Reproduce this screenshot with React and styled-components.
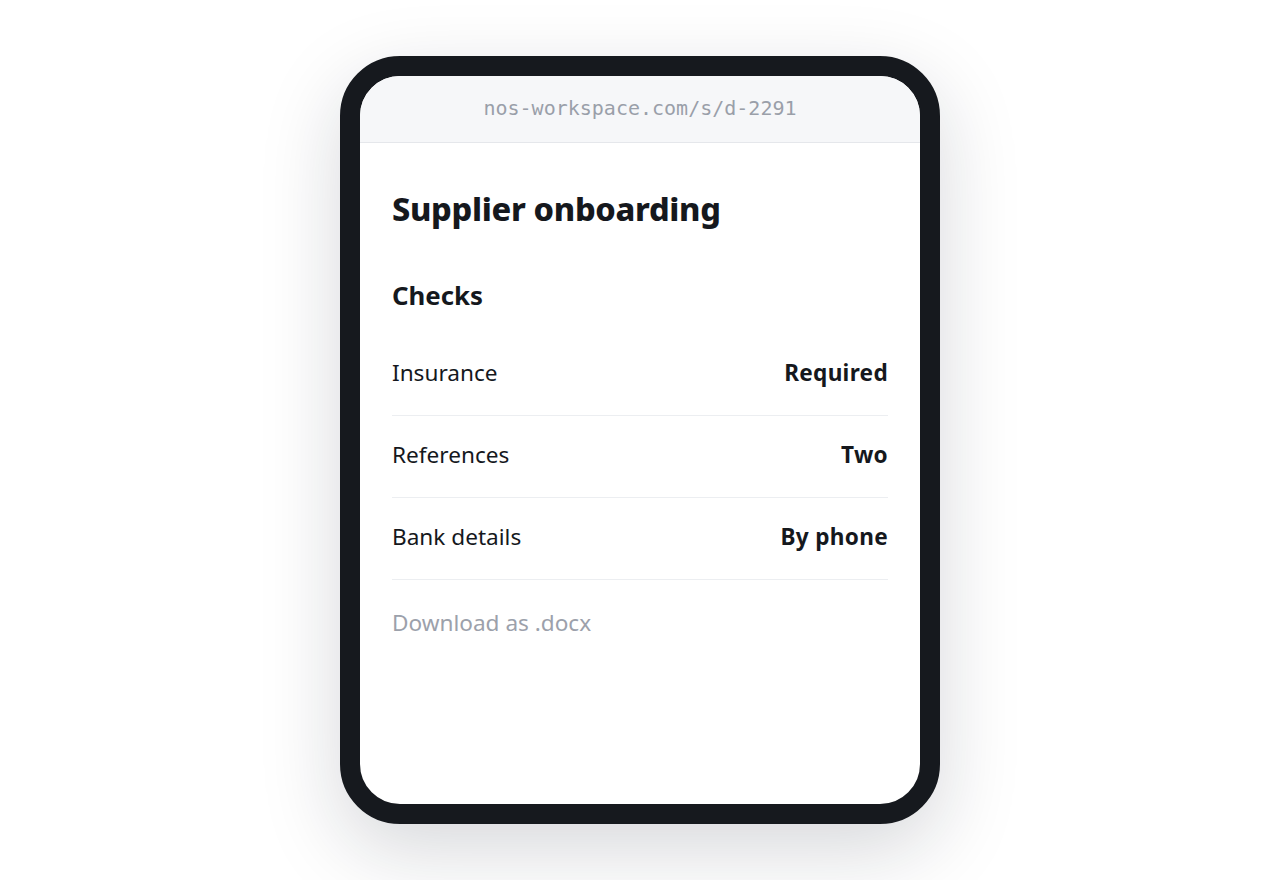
import React from "react";
import styled, { createGlobalStyle } from "styled-components";

const Global = createGlobalStyle`
  html, body { margin: 0; padding: 0; background: #ffffff; }
  body { font-family: "Noto Sans", "Open Sans", sans-serif; color: #15181d; }
`;

const Stage = styled.div`
  min-height: 100vh;
  display: flex;
  align-items: center;
  justify-content: center;
`;

const Device = styled.div`
  width: 600px;
  height: 768px;
  box-sizing: border-box;
  border: 20px solid #16191e;
  border-radius: 60px;
  background: #ffffff;
  overflow: hidden;
  box-shadow: 0 26px 80px rgba(17, 24, 39, 0.17);
  display: flex;
  flex-direction: column;
`;

const AddressBar = styled.div`
  height: 67px;
  flex: none;
  background: #f6f7f9;
  border-bottom: 1px solid #e5e7eb;
  display: flex;
  align-items: center;
  justify-content: center;
  font-family: "DejaVu Sans Mono", "Liberation Mono", monospace;
  font-size: 20px;
  color: #9a9fa9;
  padding-bottom: 2px;
  box-sizing: border-box;
`;

const Content = styled.div`
  padding: 46px 32px 0;
  display: flex;
  flex-direction: column;
`;

const Title = styled.h1`
  margin: 0;
  font-size: 32.5px;
  line-height: 40px;
  font-weight: 800;
  letter-spacing: -0.3px;
`;

const Section = styled.h2`
  margin: 48px 0 21px;
  font-size: 25.8px;
  line-height: 36px;
  font-weight: 700;
`;

const Row = styled.div`
  display: flex;
  justify-content: space-between;
  align-items: center;
  height: 82px;
  padding-bottom: 4px;
  box-sizing: border-box;
  border-bottom: 1px solid #eceef1;
  font-size: 22.6px;
`;

const Label = styled.span`
  font-weight: 400;
`;

const Value = styled.span`
  font-weight: 700;
  letter-spacing: 0.3px;
`;

const Link = styled.a`
  margin-top: 28px;
  font-size: 22.6px;
  line-height: 30px;
  color: #9ca1ab;
  text-decoration: none;
`;

const rows = [
  ["Insurance", "Required"],
  ["References", "Two"],
  ["Bank details", "By phone"],
];

export default function App() {
  return (
    <>
      <Global />
      <Stage>
        <Device>
          <AddressBar>nos-workspace.com/s/d-2291</AddressBar>
          <Content>
            <Title>Supplier onboarding</Title>
            <Section>Checks</Section>
            {rows.map(([l, v]) => (
              <Row key={l}>
                <Label>{l}</Label>
                <Value>{v}</Value>
              </Row>
            ))}
            <Link href="#">Download as .docx</Link>
          </Content>
        </Device>
      </Stage>
    </>
  );
}
